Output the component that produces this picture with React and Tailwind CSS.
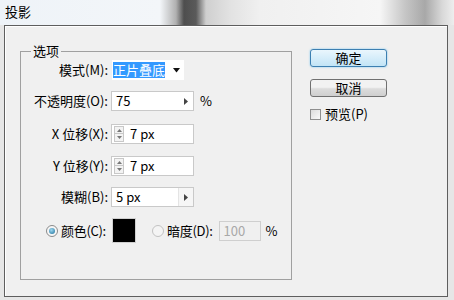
export default function App() {
  const label = "w-[87px] text-right shrink-0 whitespace-nowrap";
  return (
    <div className="w-[454px] h-[300px] overflow-hidden bg-[#e6e6e6] font-['Noto_Sans_CJK_SC',sans-serif] text-[13px] leading-[16px] text-black">
      <div className="h-[25px] flex items-center pl-[5px] bg-[linear-gradient(90deg,#eef3f8_0px,#f3f6f9_160px,#b0b0b0_176px,#4e4e4e_184px,#5a5a5a_196px,#cfcfcf_206px,#e2e2e2_230px,#f0f0f0_260px,#f6f6f6_380px,#c6c6c6_405px,#a8a8a8_425px,#d8d8d8_442px,#eeeeee_454px)]">
        <span className="text-[13px] leading-[16px] -mt-[1px]">投影</span>
      </div>
      <div className="ml-[4px] w-[444px] h-[272px] border border-[#5e5e5e] bg-[#f0f0f0] flex items-start shadow-[inset_1px_1px_0_#ffffff]">
        <fieldset className="ml-[15px] mt-[17px] w-[272px] h-[237px] border border-[#a0a0a0] shrink-0">
          <legend className="ml-[10px] px-[2px] leading-[16px]">选项</legend>
          {/* mode */}
          <div className="flex items-center h-[20px] mt-[1px]">
            <div className={label}>模式(M):</div>
            <div className="ml-[4px] w-[72px] h-[20px] bg-white flex items-center">
              <span className="ml-[1px] bg-[#3399ff] text-white leading-[16px]">正片叠底</span>
              <svg width="8" height="5" viewBox="0 0 8 5" className="ml-[8px]">
                <path d="M0 0H7L3.5 4.5Z" fill="#111" />
              </svg>
            </div>
          </div>
          {/* opacity */}
          <div className="flex items-center h-[20px] mt-[11px]">
            <div className={label}>不透明度(O):</div>
            <div className="ml-[3px] w-[83px] h-[20px] bg-white border border-[#c9c9c9] flex items-center">
              <span className="ml-[4px] flex-1">75</span>
              <div className="w-[14px] h-full flex items-center justify-center">
                <svg width="4" height="7" viewBox="0 0 4 7"><path d="M0 0L4 3.5L0 7Z" fill="#444" /></svg>
              </div>
            </div>
            <span className="ml-[6px]">%</span>
          </div>
          {/* X */}
          <div className="flex items-center h-[20px] mt-[13px]">
            <div className={label}>X 位移(X):</div>
            <div className="ml-[3px] w-[83px] h-[20px] bg-white border border-[#c9c9c9] flex items-center">
              <Spinner />
              <span className="ml-[6px]">7 px</span>
            </div>
          </div>
          {/* Y */}
          <div className="flex items-center h-[20px] mt-[12px]">
            <div className={label}>Y 位移(Y):</div>
            <div className="ml-[3px] w-[83px] h-[20px] bg-white border border-[#c9c9c9] flex items-center">
              <Spinner />
              <span className="ml-[6px]">7 px</span>
            </div>
          </div>
          {/* blur */}
          <div className="flex items-center h-[20px] mt-[11px]">
            <div className={label}>模糊(B):</div>
            <div className="ml-[3px] w-[83px] h-[20px] bg-white border border-[#c9c9c9] flex items-center">
              <span className="ml-[4px] flex-1">5 px</span>
              <div className="w-[15px] h-full flex items-center justify-center bg-[#f6f6f6] border-l border-[#e4e4e4]">
                <svg width="4" height="7" viewBox="0 0 4 7"><path d="M0 0L4 3.5L0 7Z" fill="#444" /></svg>
              </div>
            </div>
          </div>
          {/* color */}
          <div className="flex items-center h-[25px] mt-[11px]">
            <div className="w-[91px] shrink-0 flex items-center">
              <div className="ml-[25px] shrink-0 w-[12px] h-[12px] rounded-full border border-[#8a8a8a] bg-[radial-gradient(circle,#eaeaea,#ffffff)] flex items-center justify-center">
                <div className="w-[6px] h-[6px] rounded-full bg-[radial-gradient(circle_at_40%_35%,#9fd8f0,#1a6f9a)]" />
              </div>
              <span className="ml-[3px] whitespace-nowrap tracking-[-0.3px]">颜色(C):</span>
            </div>
            <div className="w-[24px] h-[25px] shrink-0 bg-black border border-[#d0d0d0]" />
            <div className="ml-[16px] shrink-0 w-[12px] h-[12px] rounded-full border border-[#c2c2c2] bg-[#f4f4f4]" />
            <span className="ml-[3px] whitespace-nowrap tracking-[-0.3px]">暗度(D):</span>
            <div className="ml-[6px] w-[42px] h-[20px] shrink-0 border border-[#cfcfcf] flex items-center">
              <span className="ml-[4px] text-[#a8a8a8]">100</span>
            </div>
            <span className="ml-[5px]">%</span>
          </div>
        </fieldset>
        <div className="ml-[18px] mt-[23px] flex flex-col">
          <div className="w-[77px] h-[18px] rounded-[3px] border border-[#3c7fb1] bg-[linear-gradient(#eaf6fd,#c2e4f6)] shadow-[0_0_2px_#6fc3ee] flex items-center justify-center">
            确定
          </div>
          <div className="mt-[12px] w-[77px] h-[18px] rounded-[3px] border border-[#707070] bg-[linear-gradient(#f2f2f2_45%,#dcdcdc_55%,#cfcfcf)] flex items-center justify-center">
            取消
          </div>
          <div className="mt-[11px] flex items-center h-[12px]">
            <div className="w-[11px] h-[11px] border border-[#8f8f8f] bg-[linear-gradient(135deg,#dcdcdc,#fafafa)]" />
            <span className="ml-[4px] whitespace-nowrap">预览(P)</span>
          </div>
        </div>
      </div>
    </div>
  );
}

function Spinner() {
  return (
    <div className="ml-[2px] flex flex-col w-[10px] h-[16px]">
      <div className="h-[8px] border border-[#c8c8c8] bg-[#f3f3f3] flex items-center justify-center">
        <svg width="5" height="3" viewBox="0 0 5 3"><path d="M0 3L2.5 0L5 3Z" fill="#777" /></svg>
      </div>
      <div className="h-[8px] border border-t-0 border-[#c8c8c8] bg-[#f3f3f3] flex items-center justify-center">
        <svg width="5" height="3" viewBox="0 0 5 3"><path d="M0 0L5 0L2.5 3Z" fill="#777" /></svg>
      </div>
    </div>
  );
}
